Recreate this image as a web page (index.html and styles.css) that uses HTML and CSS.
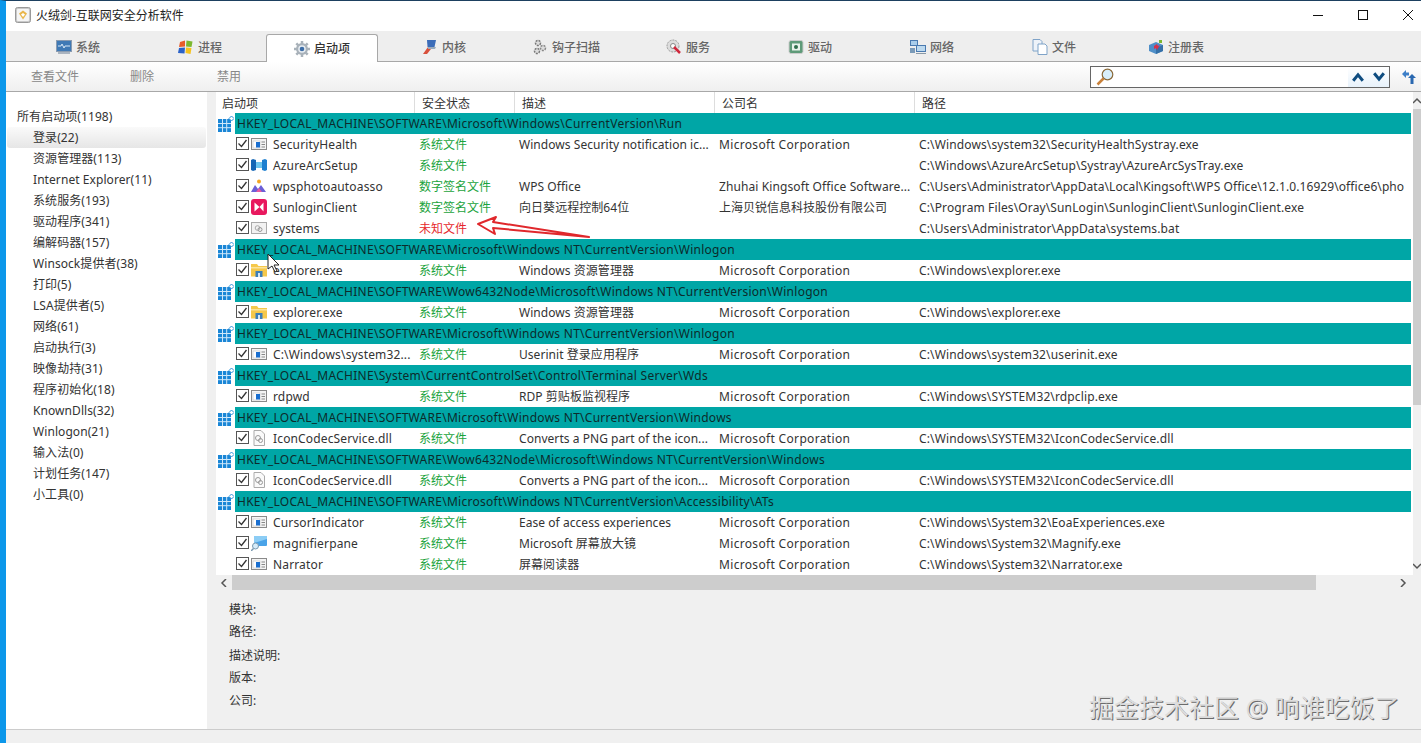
FILE: index.html
```html
<!DOCTYPE html>
<html lang="zh">
<head>
<meta charset="utf-8">
<title>火绒剑</title>
<link rel="stylesheet" href="styles.css">
</head>
<body>
<svg class="defs" width="0" height="0">
  <symbol id="i-check" viewBox="0 0 13 13"><rect x=".5" y=".5" width="12" height="12" fill="#fff" stroke="#555"/><path d="M2.500 6.500l3 3 5-6.500" fill="none" stroke="#333" stroke-width="1.300"/></symbol>
  <symbol id="i-reg" viewBox="0 0 16 16"><rect x="0" y="3" width="13" height="13" fill="#1a86d6"/><path d="M4.500 3v13M8.700 3v13M0 7.500h13M0 11.700h13" stroke="#cfe8fa" stroke-width="1"/><path d="M13.500 0l2.500 2.500-2.500 2.500-2.500-2.500z" fill="#fff" stroke="#2a90d8"/></symbol>
  <symbol id="i-win" viewBox="0 0 16 16"><rect x=".5" y="2.500" width="15" height="11" fill="#f4f4f4" stroke="#8a8a8a"/><rect x="2" y="5" width="7" height="7" fill="#fff" stroke="#bbb" stroke-width=".5"/><rect x="5" y="6" width="4" height="5.500" fill="#1a6fd0"/><path d="M10.500 6h3.500M10.500 8.500h3.500M10.500 11h3.500" stroke="#888"/></symbol>
  <symbol id="i-dll" viewBox="0 0 16 16"><path d="M3 .5h7l3.500 3.500v11.500h-10.500z" fill="#fafafa" stroke="#aaa"/><circle cx="7" cy="8" r="2.500" fill="none" stroke="#999"/><circle cx="9.500" cy="10.500" r="2" fill="none" stroke="#999"/></symbol>
  <symbol id="i-bat" viewBox="0 0 16 16"><rect x=".5" y="2.500" width="15" height="11" fill="#f2f2f2" stroke="#aaa"/><circle cx="6.500" cy="8" r="2.300" fill="none" stroke="#aaa"/><circle cx="9" cy="9.500" r="2" fill="none" stroke="#999"/></symbol>
  <symbol id="i-folder" viewBox="0 0 16 16"><path d="M0 2h6l1.500 2h8.500v10.500h-16z" fill="#f5c84b"/><path d="M0 5h16v1.500h-16z" fill="#fbe39a"/><rect x="4.500" y="9" width="7" height="6" fill="#3d7fb8"/><rect x="7" y="11" width="2" height="4" fill="#d8e6f2"/></symbol>
  <symbol id="i-azure" viewBox="0 0 16 16"><path d="M0 3l2-1 3 1v10l-3 1-2-1z" fill="#1566b5"/><path d="M16 3l-2-1-3 1v10l3 1 2-1z" fill="#1d7fd0"/><path d="M5 5h6v6h-6z" fill="#6fc6ef"/></symbol>
  <symbol id="i-wps" viewBox="0 0 16 16"><path d="M0 14l4-7 3 4 3-4 5 7z" fill="#6b5fd6"/><path d="M5 14l3-4 3 4z" fill="#e85aa0"/><circle cx="8" cy="3.500" r="2" fill="#f5a623"/></symbol>
  <symbol id="i-sun" viewBox="0 0 16 16"><rect width="16" height="16" rx="3" fill="#e8185e"/><path d="M3.500 3.500l5 4.500-5 4.500zM12.500 3.500l-4 4.500 4 4.500z" fill="#fff"/></symbol>
  <symbol id="i-mag" viewBox="0 0 16 16"><rect x="3" y="1" width="13" height="10" rx="1" fill="#4aa3e8"/><path d="M3 1h13v3l-13 4z" fill="#8ccdf5"/><circle cx="4.500" cy="11" r="3" fill="#d6ecfa" stroke="#7a9ab0"/><path d="M2.500 13.500l-2.500 2.500" stroke="#7a9ab0" stroke-width="1.500"/></symbol>
  <symbol id="t-sys" viewBox="0 0 16 16"><rect x=".5" y="1.500" width="15" height="11" fill="#3f79b5" stroke="#8a9bb0"/><path d="M2 7h3l1-2 2 4 1-2h5" fill="none" stroke="#d8e8f6"/><rect x="2" y="13" width="12" height="2" fill="#aab4c0"/></symbol>
  <symbol id="t-proc" viewBox="0 0 16 16"><path d="M2 3l5-1.500v6l-6 .5z" fill="#e85d2a"/><path d="M8.500 1.500l6 1-1 5.500-5.500-.5z" fill="#7cb82f"/><path d="M1 9l6-.5-.5 6-6.500-.5z" fill="#2b62c8"/><path d="M8 8.500l5.500.5-1 6-5-1z" fill="#f6c21c"/></symbol>
  <symbol id="t-start" viewBox="0 0 16 16"><circle cx="8" cy="8" r="6" fill="#a9b2ba"/><path d="M8 0v16M0 8h16M2.300 2.300l11.400 11.400M13.700 2.300l-11.400 11.400" stroke="#a9b2ba" stroke-width="2.500"/><circle cx="8" cy="8" r="3.800" fill="#e8edf2"/><circle cx="8" cy="8" r="2.300" fill="#3d6ea8"/></symbol>
  <symbol id="t-kern" viewBox="0 0 16 16"><path d="M5 1h9l-1.500 7h-7z" fill="#3c6cb8"/><path d="M1 15l5-7 3 2-4 5z" fill="#d8503c"/><path d="M6 8h8l-1 2h-7z" fill="#9ab"/></symbol>
  <symbol id="t-hook" viewBox="0 0 16 16"><circle cx="6" cy="4" r="2.500" fill="#ddd" stroke="#777" stroke-width="1.500" stroke-dasharray="2 1"/><circle cx="11" cy="9" r="2.500" fill="#ddd" stroke="#888" stroke-width="1.500" stroke-dasharray="2 1"/><circle cx="5" cy="12" r="2.500" fill="#ddd" stroke="#777" stroke-width="1.500" stroke-dasharray="2 1"/></symbol>
  <symbol id="t-svc" viewBox="0 0 16 16"><circle cx="7" cy="7" r="6" fill="#ddd" stroke="#999" stroke-dasharray="2 1"/><circle cx="7" cy="7" r="2.500" fill="#fff" stroke="#888"/><path d="M8 8l6 6" stroke="#d0283c" stroke-width="2.500"/></symbol>
  <symbol id="t-drv" viewBox="0 0 16 16"><rect x="1" y="1.500" width="14" height="13" rx="2" fill="#5e9a78" stroke="#ccc"/><rect x="4" y="4.500" width="8" height="7" fill="#e8f2ea"/><circle cx="8" cy="8" r="2" fill="#2f6d4a"/></symbol>
  <symbol id="t-net" viewBox="0 0 16 16"><rect x="0" y="1" width="8" height="6" fill="#4a7ab0"/><rect x="1" y="2" width="6" height="4" fill="#a9cdea"/><rect x="6" y="6" width="10" height="7" fill="#4a7ab0"/><rect x="7" y="7" width="8" height="5" fill="#bcd9ef"/><path d="M0 9h5v5h-5z" fill="#7a9ab8"/><path d="M6 14.500h10" stroke="#8a9aa8"/></symbol>
  <symbol id="t-file" viewBox="0 0 16 16"><path d="M1 .5h7l2 2v9.500h-9z" fill="#eef3f9" stroke="#7fa3c8"/><path d="M6 5h7l2 2v8.500h-9z" fill="#fff" stroke="#7fa3c8"/></symbol>
  <symbol id="t-reg" viewBox="0 0 16 16"><path d="M8 3l7 3v6l-7 3-7-3v-6z" fill="#4f8fc8"/><path d="M8 9l7-3v6l-7 3z" fill="#3570a8"/><path d="M6 7l3-2 1 2 2-1-3 5-1-2-2 1z" fill="#d8304a"/><rect x="11" y="1" width="3" height="3" fill="#7cb82f"/></symbol>
  <symbol id="i-search" viewBox="0 0 18 18"><circle cx="11.500" cy="6.500" r="5.300" fill="#d8eefa" stroke="#8a6a3a" stroke-width="1.200"/><path d="M7.500 10.500l-6 6" stroke="#c9813a" stroke-width="2.500"/></symbol>
  <symbol id="i-up" viewBox="0 0 12 10"><path d="M1.200 8.800l4.800-6 4.800 6" fill="none" stroke="#0e4c80" stroke-width="3"/></symbol>
  <symbol id="i-down" viewBox="0 0 12 10"><path d="M1.200 1.200l4.800 6 4.800-6" fill="none" stroke="#0e4c80" stroke-width="3"/></symbol>
  <symbol id="i-swap" viewBox="0 0 16 16"><path d="M1 5l4-4v2.500h3v3h-3v2.500z" fill="#3d7fc8"/><path d="M11 5l-4 4h2.500v6h3v-6h2.500z" fill="#2a68b0"/></symbol>
  <symbol id="i-app" viewBox="0 0 16 16"><rect x=".5" y=".5" width="15" height="15" rx="2" fill="#c9c9c9" stroke="#999"/><rect x="2" y="2" width="12" height="12" rx="1" fill="#f5f5f5"/><path d="M8 3.500l4 3-4 6-4-6z" fill="#e9b64a"/><path d="M8 6l2 1.500-2 2.500-2-2.500z" fill="#fff"/></symbol>
</svg>

<div class="window">
  <header class="titlebar">
    <svg class="app-icon"><use href="#i-app"/></svg>
    <span class="title">火绒剑-互联网安全分析软件</span>
    <div class="controls">
      <svg class="ctl" viewBox="0 0 10 10"><path d="M0 5.500h10" stroke="#111"/></svg>
      <svg class="ctl" viewBox="0 0 10 10"><rect x=".5" y=".5" width="9" height="9" fill="none" stroke="#111"/></svg>
      <svg class="ctl" viewBox="0 0 10 10"><path d="M0 0l10 10M10 0l-10 10" stroke="#111"/></svg>
    </div>
  </header>

  <nav class="tabs">
    <div class="tab"><svg class="tab-ic"><use href="#t-sys"/></svg>系统</div>
    <div class="tab"><svg class="tab-ic"><use href="#t-proc"/></svg>进程</div>
    <div class="tab active"><svg class="tab-ic"><use href="#t-start"/></svg>启动项</div>
    <div class="tab"><svg class="tab-ic"><use href="#t-kern"/></svg>内核</div>
    <div class="tab"><svg class="tab-ic"><use href="#t-hook"/></svg>钩子扫描</div>
    <div class="tab"><svg class="tab-ic"><use href="#t-svc"/></svg>服务</div>
    <div class="tab"><svg class="tab-ic"><use href="#t-drv"/></svg>驱动</div>
    <div class="tab"><svg class="tab-ic"><use href="#t-net"/></svg>网络</div>
    <div class="tab"><svg class="tab-ic"><use href="#t-file"/></svg>文件</div>
    <div class="tab"><svg class="tab-ic"><use href="#t-reg"/></svg>注册表</div>
  </nav>

  <div class="toolbar">
    <span class="tool t1">查看文件</span>
    <span class="tool t2">删除</span>
    <span class="tool t3">禁用</span>
    <div class="searchbox">
      <svg class="search-ic"><use href="#i-search"/></svg>
      <div class="search-nav">
        <svg class="arrow-ic"><use href="#i-up"/></svg>
        <svg class="arrow-ic"><use href="#i-down"/></svg>
      </div>
    </div>
    <svg class="swap-ic"><use href="#i-swap"/></svg>
  </div>

  <main class="main">
    <aside class="sidebar">
      <div class="side-item root">所有启动项(1198)</div>
      <div class="side-item sel">登录(22)</div>
      <div class="side-item">资源管理器(113)</div>
      <div class="side-item">Internet Explorer(11)</div>
      <div class="side-item">系统服务(193)</div>
      <div class="side-item">驱动程序(341)</div>
      <div class="side-item">编解码器(157)</div>
      <div class="side-item">Winsock提供者(38)</div>
      <div class="side-item">打印(5)</div>
      <div class="side-item">LSA提供者(5)</div>
      <div class="side-item">网络(61)</div>
      <div class="side-item">启动执行(3)</div>
      <div class="side-item">映像劫持(31)</div>
      <div class="side-item">程序初始化(18)</div>
      <div class="side-item">KnownDlls(32)</div>
      <div class="side-item">Winlogon(21)</div>
      <div class="side-item">输入法(0)</div>
      <div class="side-item">计划任务(147)</div>
      <div class="side-item">小工具(0)</div>
    </aside>

    <div class="content">
      <div class="list-area">
        <div class="list">
          <div class="row head">
            <span class="hc first">启动项</span><span class="hc">安全状态</span><span class="hc">描述</span><span class="hc">公司名</span><span class="hc">路径</span>
          </div>

          <div class="group"><svg class="reg"><use href="#i-reg"/></svg><div class="band">HKEY_LOCAL_MACHINE\SOFTWARE\Microsoft\Windows\CurrentVersion\Run</div></div>
          <div class="row"><div class="c first"><svg class="chk"><use href="#i-check"/></svg><svg class="ic"><use href="#i-win"/></svg><span>SecurityHealth</span></div><span class="c ok">系统文件</span><span class="c">Windows Security notification ic...</span><span class="c">Microsoft Corporation</span><span class="c">C:\Windows\system32\SecurityHealthSystray.exe</span></div>
          <div class="row"><div class="c first"><svg class="chk"><use href="#i-check"/></svg><svg class="ic"><use href="#i-azure"/></svg><span>AzureArcSetup</span></div><span class="c ok">系统文件</span><span class="c"></span><span class="c"></span><span class="c">C:\Windows\AzureArcSetup\Systray\AzureArcSysTray.exe</span></div>
          <div class="row"><div class="c first"><svg class="chk"><use href="#i-check"/></svg><svg class="ic"><use href="#i-wps"/></svg><span>wpsphotoautoasso</span></div><span class="c ok">数字签名文件</span><span class="c">WPS Office</span><span class="c tight">Zhuhai Kingsoft Office Software...</span><span class="c tight">C:\Users\Administrator\AppData\Local\Kingsoft\WPS Office\12.1.0.16929\office6\pho</span></div>
          <div class="row"><div class="c first"><svg class="chk"><use href="#i-check"/></svg><svg class="ic"><use href="#i-sun"/></svg><span>SunloginClient</span></div><span class="c ok">数字签名文件</span><span class="c">向日葵远程控制64位</span><span class="c zh">上海贝锐信息科技股份有限公司</span><span class="c">C:\Program Files\Oray\SunLogin\SunloginClient\SunloginClient.exe</span></div>
          <div class="row"><div class="c first"><svg class="chk"><use href="#i-check"/></svg><svg class="ic"><use href="#i-bat"/></svg><span>systems</span></div><span class="c bad">未知文件</span><span class="c"></span><span class="c"></span><span class="c">C:\Users\Administrator\AppData\systems.bat</span></div>

          <div class="group"><svg class="reg"><use href="#i-reg"/></svg><div class="band">HKEY_LOCAL_MACHINE\SOFTWARE\Microsoft\Windows NT\CurrentVersion\Winlogon</div></div>
          <div class="row"><div class="c first"><svg class="chk"><use href="#i-check"/></svg><svg class="ic"><use href="#i-folder"/></svg><span>explorer.exe</span></div><span class="c ok">系统文件</span><span class="c">Windows 资源管理器</span><span class="c">Microsoft Corporation</span><span class="c">C:\Windows\explorer.exe</span></div>

          <div class="group"><svg class="reg"><use href="#i-reg"/></svg><div class="band">HKEY_LOCAL_MACHINE\SOFTWARE\Wow6432Node\Microsoft\Windows NT\CurrentVersion\Winlogon</div></div>
          <div class="row"><div class="c first"><svg class="chk"><use href="#i-check"/></svg><svg class="ic"><use href="#i-folder"/></svg><span>explorer.exe</span></div><span class="c ok">系统文件</span><span class="c">Windows 资源管理器</span><span class="c">Microsoft Corporation</span><span class="c">C:\Windows\explorer.exe</span></div>

          <div class="group"><svg class="reg"><use href="#i-reg"/></svg><div class="band">HKEY_LOCAL_MACHINE\SOFTWARE\Microsoft\Windows NT\CurrentVersion\Winlogon</div></div>
          <div class="row"><div class="c first"><svg class="chk"><use href="#i-check"/></svg><svg class="ic"><use href="#i-win"/></svg><span>C:\Windows\system32...</span></div><span class="c ok">系统文件</span><span class="c">Userinit 登录应用程序</span><span class="c">Microsoft Corporation</span><span class="c">C:\Windows\system32\userinit.exe</span></div>

          <div class="group"><svg class="reg"><use href="#i-reg"/></svg><div class="band">HKEY_LOCAL_MACHINE\System\CurrentControlSet\Control\Terminal Server\Wds</div></div>
          <div class="row"><div class="c first"><svg class="chk"><use href="#i-check"/></svg><svg class="ic"><use href="#i-win"/></svg><span>rdpwd</span></div><span class="c ok">系统文件</span><span class="c">RDP 剪贴板监视程序</span><span class="c">Microsoft Corporation</span><span class="c">C:\Windows\SYSTEM32\rdpclip.exe</span></div>

          <div class="group"><svg class="reg"><use href="#i-reg"/></svg><div class="band">HKEY_LOCAL_MACHINE\SOFTWARE\Microsoft\Windows NT\CurrentVersion\Windows</div></div>
          <div class="row"><div class="c first"><svg class="chk"><use href="#i-check"/></svg><svg class="ic"><use href="#i-dll"/></svg><span>IconCodecService.dll</span></div><span class="c ok">系统文件</span><span class="c">Converts a PNG part of the icon...</span><span class="c">Microsoft Corporation</span><span class="c">C:\Windows\SYSTEM32\IconCodecService.dll</span></div>

          <div class="group"><svg class="reg"><use href="#i-reg"/></svg><div class="band">HKEY_LOCAL_MACHINE\SOFTWARE\Wow6432Node\Microsoft\Windows NT\CurrentVersion\Windows</div></div>
          <div class="row"><div class="c first"><svg class="chk"><use href="#i-check"/></svg><svg class="ic"><use href="#i-dll"/></svg><span>IconCodecService.dll</span></div><span class="c ok">系统文件</span><span class="c">Converts a PNG part of the icon...</span><span class="c">Microsoft Corporation</span><span class="c">C:\Windows\SYSTEM32\IconCodecService.dll</span></div>

          <div class="group"><svg class="reg"><use href="#i-reg"/></svg><div class="band">HKEY_LOCAL_MACHINE\SOFTWARE\Microsoft\Windows NT\CurrentVersion\Accessibility\ATs</div></div>
          <div class="row"><div class="c first"><svg class="chk"><use href="#i-check"/></svg><svg class="ic"><use href="#i-win"/></svg><span>CursorIndicator</span></div><span class="c ok">系统文件</span><span class="c">Ease of access experiences</span><span class="c">Microsoft Corporation</span><span class="c">C:\Windows\System32\EoaExperiences.exe</span></div>
          <div class="row"><div class="c first"><svg class="chk"><use href="#i-check"/></svg><svg class="ic"><use href="#i-mag"/></svg><span>magnifierpane</span></div><span class="c ok">系统文件</span><span class="c">Microsoft 屏幕放大镜</span><span class="c">Microsoft Corporation</span><span class="c">C:\Windows\System32\Magnify.exe</span></div>
          <div class="row"><div class="c first"><svg class="chk"><use href="#i-check"/></svg><svg class="ic"><use href="#i-win"/></svg><span>Narrator</span></div><span class="c ok">系统文件</span><span class="c">屏幕阅读器</span><span class="c">Microsoft Corporation</span><span class="c">C:\Windows\System32\Narrator.exe</span></div>
        </div>
        <div class="vscroll">
          <svg class="sb-arrow" viewBox="0 0 8 8"><path d="M0 6l4-4 4 4" fill="none" stroke="#555" stroke-width="1.500"/></svg>
          <div class="vthumb"></div>
          <svg class="sb-arrow end" viewBox="0 0 8 8"><path d="M0 2l4 4 4-4" fill="none" stroke="#555" stroke-width="1.500"/></svg>
        </div>
      </div>
      <div class="hscroll">
        <svg class="sb-harrow" viewBox="0 0 8 8"><path d="M6 0l-4 4 4 4" fill="none" stroke="#555" stroke-width="1.500"/></svg>
        <div class="hthumb"></div>
        <svg class="sb-harrow" viewBox="0 0 8 8"><path d="M2 0l4 4-4 4" fill="none" stroke="#555" stroke-width="1.500"/></svg>
      </div>
      <section class="details">
        <div class="d-line">模块:</div>
        <div class="d-line">路径:</div>
        <div class="d-line gap">描述说明:</div>
        <div class="d-line">版本:</div>
        <div class="d-line gap1">公司:</div>
      </section>
    </div>
  </main>
  <footer class="statusbar"></footer>

  <svg class="red-arrow" viewBox="0 0 115 24"><path d="M2 9L20 2l-3 5 96 15-96-9 2 6z" fill="#fff" stroke="#e0282c" stroke-width="2" stroke-linejoin="round"/></svg>
  <svg class="cursor" viewBox="0 0 12 20"><path d="M1 1v15l4-3 3 6 2-1-3-6h5z" fill="#fff" stroke="#222"/></svg>
  <div class="watermark">掘金技术社区 @ 响谁吃饭了</div>
</div>
</body>
</html>
```

FILE: styles.css
```css
* { box-sizing: border-box; }
html, body { margin: 0; padding: 0; height: 100%; overflow: hidden; }
body { font: 12px/21px "Noto Sans", "Noto Sans CJK SC", sans-serif; color: #333; background: #f0f0f0; }
.defs { position: absolute; }
.window { position: relative; width: 1421px; height: 743px; display: flex; flex-direction: column; border-top: 1px solid #1d4060; border-left: 6px solid #0c97ea; background: #f0f0f0; overflow: hidden; }

.titlebar { height: 30px; flex: none; background: #fff; display: flex; align-items: center; padding: 0 0 2px 9px; }
.app-icon { width: 16px; height: 16px; flex: none; }
.title { margin-left: 5px; color: #222; }
.controls { margin-left: auto; display: flex; align-items: center; gap: 35px; padding-right: 8px; }
.ctl { width: 10px; height: 10px; }

.tabs { height: 31px; flex: none; background: #eee; border-bottom: 1px solid #a8a8a8; display: flex; padding-left: 11px; }
.tab { width: 122px; flex: none; display: flex; align-items: center; justify-content: center; gap: 4px; color: #666; font-weight: 500; padding-top: 2px; }
.tab-ic { width: 16px; height: 16px; flex: none; }
.tab.active { width: 112px; margin: 3px 5px -1px; padding-top: 0; background: #fff; border: 1px solid #a8a8a8; border-bottom: 0; border-radius: 3px 3px 0 0; color: #333; }

.toolbar { height: 30px; flex: none; background: linear-gradient(#fff, #efefef); border-bottom: 1px solid #a8a8a8; display: flex; align-items: center; padding-left: 25px; color: #888; }
.tool.t2 { margin-left: 51px; }
.tool.t3 { margin-left: 63px; }
.searchbox { margin-left: auto; width: 300px; height: 22px; background: #fff; border: 1px solid #666; display: flex; align-items: center; padding-left: 5px; }
.search-ic { width: 18px; height: 18px; margin-right: auto; }
.search-nav { display: flex; align-items: center; gap: 9px; height: 20px; padding: 0 4px 0 4px; background: linear-gradient(#fff, #e8f2fb); }
.arrow-ic { width: 12px; height: 10px; }
.swap-ic { width: 16px; height: 16px; margin: 0 4px 0 11px; }

.main { flex: 1; display: flex; min-height: 0; }
.sidebar { width: 201px; flex: none; background: #fff; padding-top: 14px; padding-left: 1px; }
.side-item { height: 21px; padding-left: 26px; white-space: nowrap; letter-spacing: .07px; }
.side-item.root { padding-left: 10px; }
.side-item.sel { background: linear-gradient(#fafafa, #e6e6e6); border-radius: 3px; margin-right: 1px; }

.content { flex: 1; margin-left: 9px; min-width: 0; display: flex; flex-direction: column; }
.list-area { height: 483px; flex: none; display: flex; }
.list { width: 1197px; flex: none; background: #fff; overflow: hidden; }
.row { display: grid; grid-template-columns: 198px 100px 200px 200px 499px; height: 21px; white-space: nowrap; }
.row.head { color: #333; line-height: 23px; }
.hc { padding-left: 7px; border-left: 1px solid #ddd; }
.hc.first { padding-left: 6px; border-left: 0; }
.c { padding-left: 5px; overflow: hidden; }
.c.first { display: flex; align-items: center; padding-left: 20px; letter-spacing: .15px; }
.c.first span { margin-left: 6px; }
.row > .c:nth-child(3) { letter-spacing: .05px; }
.row > .c:nth-child(4) { letter-spacing: .33px; }
.row > .c:nth-child(5) { letter-spacing: .13px; }
.row > .c.zh:nth-child(4) { letter-spacing: 0; }
.row > .c.tight:nth-child(4) { letter-spacing: .1px; }
.row > .c.tight:nth-child(5) { letter-spacing: .08px; }
.chk { width: 13px; height: 13px; flex: none; margin-top: -2px; }
.ic { width: 16px; height: 16px; flex: none; margin-left: 2px; margin-top: -2px; }
.ok { color: #1ba33c; }
.bad { color: #e6282c; }
.group { display: flex; height: 21px; align-items: stretch; padding-left: 2px; }
.reg { width: 16px; height: 16px; flex: none; margin-top: 3px; }
.band { width: 1176px; margin-left: 1px; background: #00a6a6; color: #0c2b2b; padding-left: 2px; white-space: nowrap; letter-spacing: .27px; }

.vscroll { flex: 1; display: flex; flex-direction: column; align-items: center; background: #f0f0f0; padding-top: 5px; }
.sb-arrow { width: 8px; height: 8px; flex: none; }
.sb-arrow.end { margin-top: auto; margin-bottom: 5px; }
.vthumb { width: 100%; height: 296px; margin-top: 4px; background: #cdcdcd; }
.hscroll { height: 15px; flex: none; width: 1197px; display: flex; align-items: center; background: #f0f0f0; }
.sb-harrow { width: 8px; height: 8px; flex: none; margin: 0 4px; }
.hthumb { width: 1084px; height: 15px; background: #cdcdcd; }
.hscroll .sb-harrow:last-child { margin-left: auto; margin-right: 6px; }

.details { padding: 9px 0 0 13px; }
.d-line { height: 22px; color: #333; }
.d-line.gap { margin-top: 2px; }
.d-line.gap1 { margin-top: 1px; }

.statusbar { height: 14px; flex: none; background: #f0f0f0; border-top: 1px solid #ccc; }

.red-arrow { position: absolute; left: 470px; top: 214px; width: 115px; height: 24px; }
.cursor { position: absolute; left: 261px; top: 252px; width: 12px; height: 20px; }
.watermark { position: absolute; left: 1083px; top: 690px; font-size: 25px; line-height: 32px; color: #dcdcdc; text-shadow: 1px 1px 0 #6c6c6c; white-space: nowrap; }
```
